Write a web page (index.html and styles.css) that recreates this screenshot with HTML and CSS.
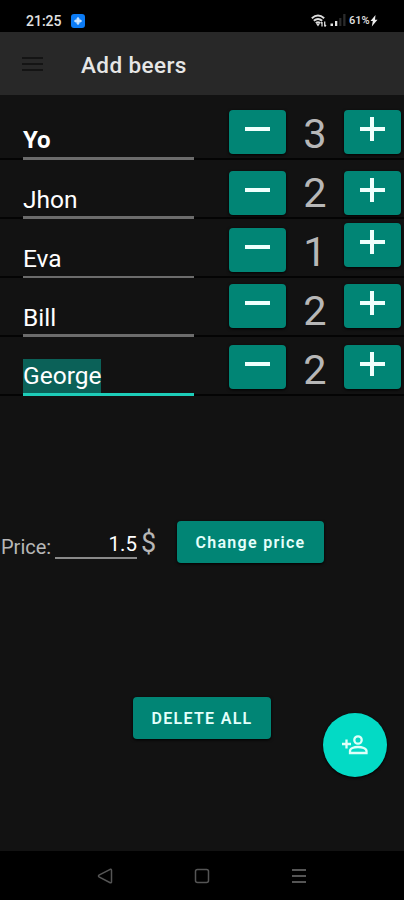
FILE: index.html
```html
<!DOCTYPE html>
<html lang="en">
<head>
    <meta charset="utf-8">
    <title>Add beers</title>
    <link rel="stylesheet" href="styles.css">
</head>
<body>
    <div class="status-bar">
        <span class="clock">21:25</span>
        <svg class="app-badge" viewBox="0 0 14 14">
            <rect width="14" height="14" rx="3" fill="#0b7bf5"/>
            <path d="M7 3l4 4-4 4-4-4z" fill="#8cc2fb"/>
            <path d="M7 3.500v7M3.500 7h7" stroke="#d5eaff" stroke-width="1.300"/>
        </svg>
        <div class="status-icons">
            <svg class="wifi" viewBox="0 0 16 14" fill="none" stroke="#ddd" stroke-width="1.9">
                <path d="M.8 4.2Q7 -1 13.2 4.2M2.8 6.7Q7 3.2 11.2 6.7M4.8 9Q7 7.3 9.2 9"/>
                <path d="M5 9.500h4L7 12.500z" fill="#ddd" stroke="none"/>
                <path d="M11 12.500V8M9.8 9.4L11 8M13.7 7.5v5M15 11L13.7 12.500" stroke-width="1.3"/>
            </svg>
            <svg class="signal" viewBox="0 0 16 13">
                <path d="M.5 9.5h2.5V12H.5zM5 7h2.3v5H5z" fill="#e4e4e4"/>
                <path d="M9.2 4h2.2v8H9.2zM13.2 0h2.3v12h-2.3z" fill="#2b2b2b"/>
            </svg>
            <span class="battery">61%</span>
            <svg class="bolt" viewBox="0 0 8 12"><path d="M5.5 0L.5 6h2.3L1.8 11.5 7.5 4.8H5z" fill="#eee"/></svg>
        </div>
    </div>

    <header class="toolbar">
        <svg class="menu" viewBox="0 0 21 16"><path d="M0 2h21M0 8h21M0 14h21" stroke="#141414" stroke-width="2"/></svg>
        <h1>Add beers</h1>
    </header>

    <main>
        <div class="people">
            <div class="person me">
                <div class="name"><span>Yo</span></div>
                <button class="minus"></button>
                <span class="count">3</span>
                <button class="plus"></button>
            </div>
            <div class="person">
                <div class="name"><span>Jhon</span></div>
                <button class="minus"></button>
                <span class="count">2</span>
                <button class="plus"></button>
            </div>
            <div class="person">
                <div class="name"><span>Eva</span></div>
                <button class="minus"></button>
                <span class="count">1</span>
                <button class="plus"></button>
            </div>
            <div class="person">
                <div class="name"><span>Bill</span></div>
                <button class="minus"></button>
                <span class="count">2</span>
                <button class="plus"></button>
            </div>
            <div class="person editing">
                <div class="name"><span>George</span></div>
                <button class="minus"></button>
                <span class="count">2</span>
                <button class="plus"></button>
            </div>
        </div>

        <div class="price-row">
            <span class="price-label">Price:</span>
            <span class="price-value">1.5</span>
            <span class="currency">$</span>
            <button class="button change">Change price</button>
        </div>

        <button class="button delete">DELETE ALL</button>

        <button class="fab">
            <svg viewBox="0 0 26 20" fill="none" stroke="#dffff9" stroke-width="2.3">
                <path d="M0 9h9M4.5 4.5v9"/>
                <circle cx="16" cy="5" r="3.7"/>
                <path d="M8 18v-2c0-2.6 4-4 8-4s8.5 1.4 8.5 4v2z"/>
            </svg>
        </button>
    </main>

    <nav class="nav-bar">
        <svg viewBox="0 0 16 16"><path d="M13.2 1.3L2 7.2q-1 .8 0 1.6l11.2 5.9q1.3.5 1.3-1V2.3q0-1.5-1.3-1z"/></svg>
        <svg viewBox="0 0 16 16"><rect x="1.5" y="1.5" width="13" height="13" rx="2"/></svg>
        <svg class="recents" viewBox="0 0 16 16"><path d="M1 2h14M1 8h14M1 14h14"/></svg>
    </nav>
</body>
</html>
```

FILE: styles.css
```css
* {
    box-sizing: border-box;
}

body {
    margin: 0;
    height: 900px;
    display: flex;
    flex-direction: column;
    overflow: hidden;
    background: #121212;
    color: #fff;
    font-family: Roboto, sans-serif;
}

button {
    border: none;
    padding: 0;
    font-family: inherit;
    color: #e4fffb;
    background-color: #018575;
    border-radius: 4px;
    box-shadow: 0 1px 3px #000;
}

/* status bar */
.status-bar {
    display: flex;
    align-items: center;
    height: 32px;
    padding: 9px 26px 0 26px;
    background: #000;
    color: #e2e2e2;
}

.clock {
    width: 45px;
    font-size: 14px;
    font-weight: 500;
}

.app-badge {
    width: 14px;
    height: 14px;
}

.status-icons {
    display: flex;
    align-items: center;
    margin-left: auto;
}

.wifi {
    width: 16px;
    height: 14px;
    margin-right: 3px;
}

.signal {
    width: 16px;
    height: 13px;
    margin-right: 3px;
}

.battery {
    width: 21px;
    font-size: 11px;
    font-weight: 500;
    white-space: nowrap;
}

.bolt {
    width: 8px;
    height: 12px;
}

/* toolbar */
.toolbar {
    display: flex;
    align-items: center;
    height: 63px;
    padding-left: 22px;
    background: #282828;
}

.menu {
    width: 21px;
    height: 16px;
    margin-right: 38px;
}

.toolbar h1 {
    margin: 2px 0 0;
    font-size: 22.5px;
    font-weight: 500;
    letter-spacing: 0.4px;
    color: #e6e6e6;
}

main {
    position: relative;
    flex: 1;
    display: flex;
    flex-direction: column;
}

/* people list */
.people {
    padding-top: 6px;
}

.person {
    --top: 9px;
    --plus-top: var(--top);
    display: flex;
    align-items: flex-start;
    height: 59px;
    padding-left: 23px;
    border-bottom: 2px solid #040404;
}

.person:nth-child(2) {
    --top: 11px;
}

.person:nth-child(3) {
    --plus-top: 4px;
}

.person:nth-child(4) {
    --top: 6px;
}

.person:nth-child(5) {
    --top: 8px;
}

.name {
    width: 171px;
    height: 59px;
    margin-right: 35px;
    padding-top: 23px;
    border-bottom: 3px solid #6c6c6c;
    font-size: 24.5px;
    line-height: 33px;
}

.name span {
    display: inline-block;
}

.me .name {
    font-size: 24px;
    font-weight: 700;
}

.person:nth-child(3) .name {
    border-bottom-width: 2px;
}

.editing .name {
    padding-top: 22px;
    border-color: #1dcdb9;
}

.editing .name span {
    background: #0b6158;
    line-height: 34px;
}

.minus,
.plus {
    width: 57px;
    height: 44px;
    margin-top: var(--top);
    background-image: linear-gradient(#effffc, #effffc);
    background-repeat: no-repeat;
    background-position: 16px 17px;
    background-size: 25px 4px;
}

.plus {
    margin-top: var(--plus-top);
    background-image: linear-gradient(#effffc, #effffc), linear-gradient(#effffc, #effffc);
    background-position: 16px 17px, 26px 7px;
    background-size: 25px 4px, 4px 24px;
}

.count {
    width: 58px;
    padding-top: 8px;
    font-size: 41.5px;
    line-height: 49px;
    text-align: center;
    color: #b7b7b7;
}

/* price */
.price-row {
    display: flex;
    align-items: flex-start;
    margin-top: 125px;
    height: 42px;
}

.price-label {
    width: 55px;
    padding: 14px 0 0 1px;
    font-size: 20px;
    line-height: 24px;
    color: #b7b7b7;
}

.price-value {
    width: 82px;
    height: 38px;
    padding-top: 11px;
    border-bottom: 2px solid #8a8a8a;
    font-size: 20.5px;
    line-height: 24px;
    text-align: right;
}

.currency {
    width: 40px;
    padding: 6px 0 0 4px;
    font-size: 27px;
    line-height: 32px;
    color: #b7b7b7;
}

.button {
    height: 42px;
    font-size: 16px;
    font-weight: 600;
    letter-spacing: 1.3px;
}

.change {
    width: 147px;
}

.delete {
    width: 138px;
    margin: 134px 0 0 133px;
}

/* floating action button */
.fab {
    position: absolute;
    right: 17px;
    bottom: 74px;
    width: 64px;
    height: 64px;
    border-radius: 50%;
    background: #03dac5;
}

.fab svg {
    width: 26px;
    height: 20px;
    vertical-align: middle;
}

/* android navigation */
.nav-bar {
    display: flex;
    gap: 81px;
    height: 49px;
    padding: 17px 0 0 97px;
    background: #000;
}

.nav-bar svg {
    width: 16px;
    height: 16px;
    fill: none;
    stroke: #555;
    stroke-width: 1.5;
}

.nav-bar .recents {
    stroke-width: 2;
}
```
